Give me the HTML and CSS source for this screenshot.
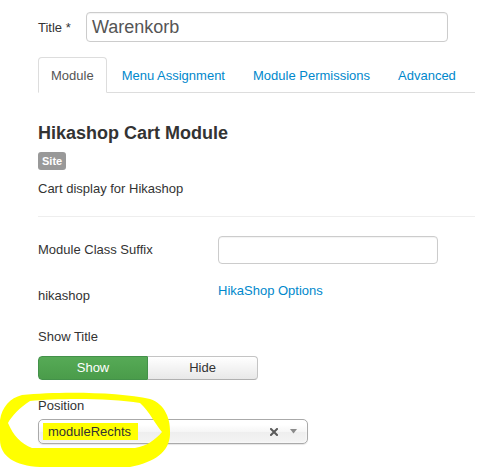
FILE: index.html
```html
<!DOCTYPE html>
<html>
<head>
<meta charset="utf-8">
<link rel="stylesheet" href="styles.css">
</head>
<body>
<div class="page">
  <div class="title-row">
    <div class="title-label">Title *</div>
    <div class="title-input">Warenkorb</div>
  </div>
  <ul class="tabs">
    <li class="tab active"><a>Module</a></li>
    <li class="tab"><a>Menu Assignment</a></li>
    <li class="tab"><a>Module Permissions</a></li>
    <li class="tab"><a>Advanced</a></li>
  </ul>
  <div class="tab-content">
    <h3 class="heading">Hikashop Cart Module</h3>
    <span class="badge">Site</span>
    <p class="desc">Cart display for Hikashop</p>
    <hr class="sep">
    <div class="control-group">
      <div class="control-label">Module Class Suffix</div>
      <div class="controls"><div class="text-input"></div></div>
    </div>
    <div class="control-group">
      <div class="control-label">hikashop</div>
      <div class="controls"><a class="link">HikaShop Options</a></div>
    </div>
    <div class="stack-group">
      <div class="stack-label show-label">Show Title</div>
      <div class="btn-group">
        <span class="btn btn-on">Show</span>
        <span class="btn btn-off">Hide</span>
      </div>
    </div>
    <div class="stack-group">
      <div class="stack-label pos-label">Position</div>
      <div class="chosen">
        <span class="chosen-text"><span class="hl">moduleRechts</span></span>
        <svg class="chosen-x" width="8" height="8" viewBox="0 0 8 8"><path d="M1 1 L7 7 M7 1 L1 7" stroke="#5a5a5a" stroke-width="2" stroke-linecap="square"/></svg>
        <svg class="chosen-arrow" width="7" height="5" viewBox="0 0 7 5"><polygon points="0,0 7,0 3.5,4.5" fill="#8a8a8a"/></svg>
      </div>
    </div>
  </div>
  <svg class="ring" width="490" height="467" viewBox="0 0 490 467">
    <path fill="#ffff00" fill-rule="evenodd" d="M22 395 C60 391 120 392 150 399 C165 404 171 419 170 435 C169 452 155 462 130 467 L40 467 C15 466 0 456 0 440 L0 420 C2 407 10 398 22 395 Z M30 401 C20 407 11 417 8 423 C13 435 21 444 32 448 L135 448 C147 446 155 440 162 432 C155 424 150 412 140 403 C110 398 60 398 30 401 Z"/>
  </svg>
</div>
</body>
</html>
```
FILE: styles.css
```css
* { box-sizing: border-box; }
html, body { margin: 0; padding: 0; background: #fff; }
body {
  font-family: "Liberation Sans", Arial, sans-serif;
  font-size: 13px;
  line-height: 18px;
  color: #333;
}
.page {
  position: relative;
  width: 490px;
  height: 467px;
  overflow: hidden;
  padding: 12px 0 0 38px;
}
.title-row {
  display: flex;
  align-items: center;
  height: 30px;
}
.title-label {
  width: 48px;
  padding-top: 1px;
}
.title-input {
  width: 362px;
  height: 30px;
  border: 1px solid #ccc;
  border-radius: 4px;
  font-size: 18px;
  line-height: 28px;
  padding-left: 5px;
  color: #555;
  box-shadow: inset 0 1px 1px rgba(0,0,0,0.05);
}
.tabs {
  list-style: none;
  margin: 15px 0 0 0;
  padding: 0;
  width: 437px;
  display: flex;
  border-bottom: 1px solid #ddd;
}
.tab { margin-bottom: -1px; }
.tab a {
  display: block;
  padding: 9px 12px 7px;
  line-height: 18px;
  margin-right: 2px;
  border: 1px solid transparent;
  border-radius: 4px 4px 0 0;
  color: #0088cc;
}
.tab.active a {
  color: #555;
  border-color: #ddd #ddd transparent;
  background: #fff;
}
.tab-content { width: 437px; }
.heading {
  margin: 30px 0 0 0;
  font-size: 18px;
  line-height: 20px;
  font-weight: bold;
  color: #333;
}
.badge {
  display: inline-block;
  margin-top: 9px;
  background: #999;
  color: #fff;
  font-size: 11px;
  font-weight: bold;
  line-height: 14px;
  padding: 2px 4px;
  border-radius: 3px;
  vertical-align: top;
}
.desc { margin: 10px 0 0 0; }
.sep {
  margin: 18px 0 19px 0;
  border: 0;
  border-top: 1px solid #eee;
  height: 0;
}
.control-group {
  display: flex;
  margin-bottom: 18px;
}
.control-label {
  width: 180px;
  padding-top: 5px;
}
.text-input {
  width: 220px;
  height: 28px;
  border: 1px solid #ccc;
  border-radius: 4px;
  box-shadow: inset 0 1px 1px rgba(0,0,0,0.05);
}
.link { color: #0088cc; }
.stack-group { margin-bottom: 18px; }
.show-label { padding-top: 5px; margin-bottom: 10px; }
.pos-label { margin-top: -1px; margin-bottom: 4px; }
.btn-group { display: flex; }
.btn {
  display: block;
  width: 110px;
  height: 24px;
  line-height: 22px;
  text-align: center;
  border: 1px solid #bbb;
}
.btn-on {
  background: linear-gradient(#56aa56, #4a9c4a);
  border-color: #43914a;
  color: #fff;
  border-radius: 4px 0 0 4px;
}
.btn-off {
  background: linear-gradient(#ffffff, #e8e8e8);
  color: #333;
  border-left: 0;
  border-color: #c4c4c4 #c4c4c4 #b0b0b0;
  border-radius: 0 4px 4px 0;
}
.chosen {
  position: relative;
  width: 270px;
  height: 25px;
  border: 1px solid #aaa;
  border-radius: 5px;
  background: linear-gradient(#ffffff 20%, #f6f6f6 50%, #eeeeee 52%, #f4f4f4 100%);
  display: flex;
  align-items: center;
  padding-left: 4px;
  box-shadow: 0 0 3px #fff inset, 0 1px 1px rgba(0,0,0,0.1);
}
.chosen-text { flex: 1; }
.hl {
  display: inline-block;
  background: #ffff00;
  line-height: 17px;
  padding: 0 7px 0 5px;
  color: #333;
}
.chosen-x { margin-right: 12px; }
.chosen-arrow { margin-right: 10px; }
.ring {
  position: absolute;
  left: 0;
  top: 0;
  pointer-events: none;
}
```
